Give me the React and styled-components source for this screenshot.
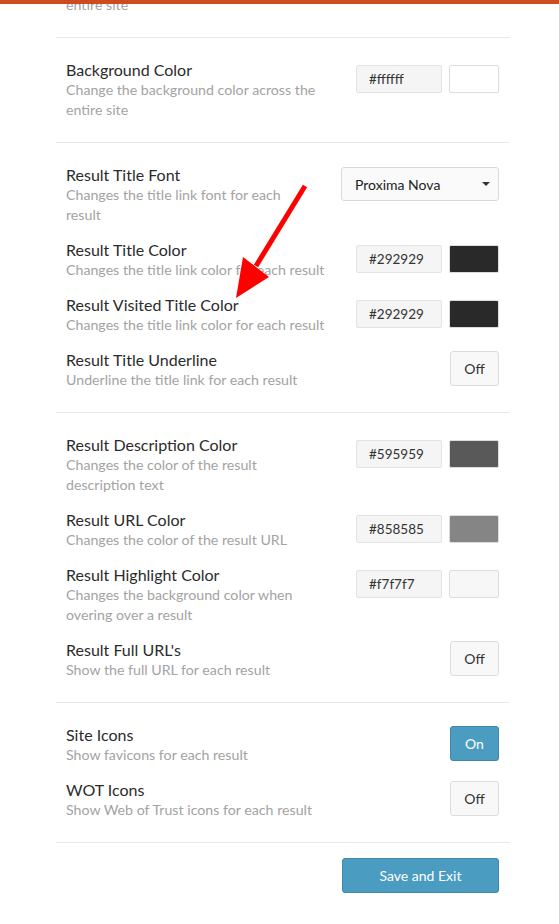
import React from "react";
import styled, { createGlobalStyle } from "styled-components";

const Global = createGlobalStyle`
  html, body { margin: 0; padding: 0; background: #ffffff; }
  body { font-family: Lato, "Liberation Sans", Arial, sans-serif; color: #2b2b2b; overflow: hidden; }
  * { box-sizing: border-box; }
`;

const TopBar = styled.div`
  position: relative;
  z-index: 2;
  height: 4px;
  background: #cc4b1f;
`;

const Page = styled.div`
  position: relative;
  display: flow-root;
`;

const Panel = styled.div`
  width: 454px;
  margin: ${(p) => p.$offset}px 0 0 56px;
`;

const Section = styled.section`
  display: flex;
  flex-direction: column;
  gap: 14px;
  padding: 21px 11px 22px 10px;
  border-bottom: 1px solid #e8e8e8;
`;

const Row = styled.div`
  display: flex;
  align-items: flex-start;
  gap: 28px;
`;

const TextCol = styled.div`
  flex: 1;
  min-width: 0;
`;

const Title = styled.div`
  font-size: 16px;
  line-height: 21px;
  color: #2b2b2b;
`;

const Desc = styled.div`
  font-size: 14.2px;
  line-height: 20px;
  color: #a3a3a3;
`;

const Controls = styled.div`
  display: flex;
  gap: 7px;
  flex-shrink: 0;
  margin-top: ${(p) => p.$top || 0}px;
`;

const HexInput = styled.div`
  width: 86px;
  height: 28px;
  padding: 0 12px;
  display: flex;
  align-items: center;
  background: #f5f5f5;
  border: 1px solid #e3e3e3;
  border-radius: 2px;
  font-size: 13.5px;
  color: #333;
`;

const Swatch = styled.div`
  width: 50px;
  height: 28px;
  border: 1px solid #dcdcdc;
  border-radius: 2px;
  background: ${(p) => p.$color};
`;

const Select = styled.div`
  width: 158px;
  height: 34px;
  padding: 0 8px 0 13px;
  display: flex;
  align-items: center;
  justify-content: space-between;
  background: #fafafa;
  border: 1px solid #dadada;
  border-radius: 3px;
  font-size: 14px;
  color: #222;
`;

const Caret = styled.span`
  width: 0;
  height: 0;
  border-left: 4px solid transparent;
  border-right: 4px solid transparent;
  border-top: 4px solid #333;
`;

const Toggle = styled.button`
  width: 49px;
  height: 35px;
  padding: 0;
  border-radius: 3px;
  font-family: inherit;
  font-size: 14px;
  border: 1px solid ${(p) => (p.$on ? "#3f88aa" : "#dcdcdc")};
  background: ${(p) => (p.$on ? "#4a9cc1" : "#f8f8f8")};
  color: ${(p) => (p.$on ? "#ffffff" : "#333333")};
`;

const Footer = styled.div`
  display: flex;
  justify-content: flex-end;
  padding: 15px 11px 0 10px;
`;

const SaveButton = styled.button`
  width: 157px;
  height: 35px;
  border-radius: 3px;
  border: 1px solid #3f88aa;
  background: #4a9cc1;
  color: #fff;
  font-family: inherit;
  font-size: 14px;
`;

const ArrowSvg = styled.svg`
  position: absolute;
  left: 0;
  top: -4px;
  pointer-events: none;
  z-index: 3;
`;

const ColorCtl = ({ hex }) => (
  <Controls $top={6}>
    <HexInput>{hex}</HexInput>
    <Swatch $color={hex} />
  </Controls>
);

const Setting = ({ title, desc, children }) => (
  <Row>
    <TextCol>
      <Title>{title}</Title>
      <Desc>{desc}</Desc>
    </TextCol>
    {children}
  </Row>
);

const sections = [
  [
    { title: "Text Color", desc: "Change the default text color across the entire site", hex: "#292929" },
  ],
  [
    { title: "Background Color", desc: "Change the background color across the entire site", hex: "#ffffff" },
  ],
  [
    { title: "Result Title Font", desc: "Changes the title link font for each result", select: "Proxima Nova" },
    { title: "Result Title Color", desc: "Changes the title link color for each result", hex: "#292929" },
    { title: "Result Visited Title Color", desc: "Changes the title link color for each result", hex: "#292929" },
    { title: "Result Title Underline", desc: "Underline the title link for each result", toggle: false },
  ],
  [
    { title: "Result Description Color", desc: "Changes the color of the result description text", hex: "#595959" },
    { title: "Result URL Color", desc: "Changes the color of the result URL", hex: "#858585" },
    { title: "Result Highlight Color", desc: "Changes the background color when overing over a result", hex: "#f7f7f7" },
    { title: "Result Full URL's", desc: "Show the full URL for each result", toggle: false },
  ],
  [
    { title: "Site Icons", desc: "Show favicons for each result", toggle: true },
    { title: "WOT Icons", desc: "Show Web of Trust icons for each result", toggle: false },
  ],
];

export default function App() {
  return (
    <>
      <Global />
      <TopBar />
      <Page>
        <Panel $offset={-71}>
          {sections.map((items, si) => (
            <Section key={si}>
              {items.map((it) => (
                <Setting key={it.title} title={it.title} desc={it.desc}>
                  {it.hex && <ColorCtl hex={it.hex} />}
                  {it.select && (
                    <Controls $top={3}>
                      <Select>
                        {it.select}
                        <Caret />
                      </Select>
                    </Controls>
                  )}
                  {it.toggle !== undefined && (
                    <Controls $top={2}>
                      <Toggle $on={it.toggle}>{it.toggle ? "On" : "Off"}</Toggle>
                    </Controls>
                  )}
                </Setting>
              ))}
            </Section>
          ))}
          <Footer>
            <SaveButton>Save and Exit</SaveButton>
          </Footer>
        </Panel>
        <ArrowSvg width="559" height="924" viewBox="0 0 559 924">
          <line x1="305" y1="186" x2="256" y2="266" stroke="#ff0000" strokeWidth="5" />
          <polygon points="243,257 269,277 236,298" fill="#ff0000" />
        </ArrowSvg>
      </Page>
    </>
  );
}
